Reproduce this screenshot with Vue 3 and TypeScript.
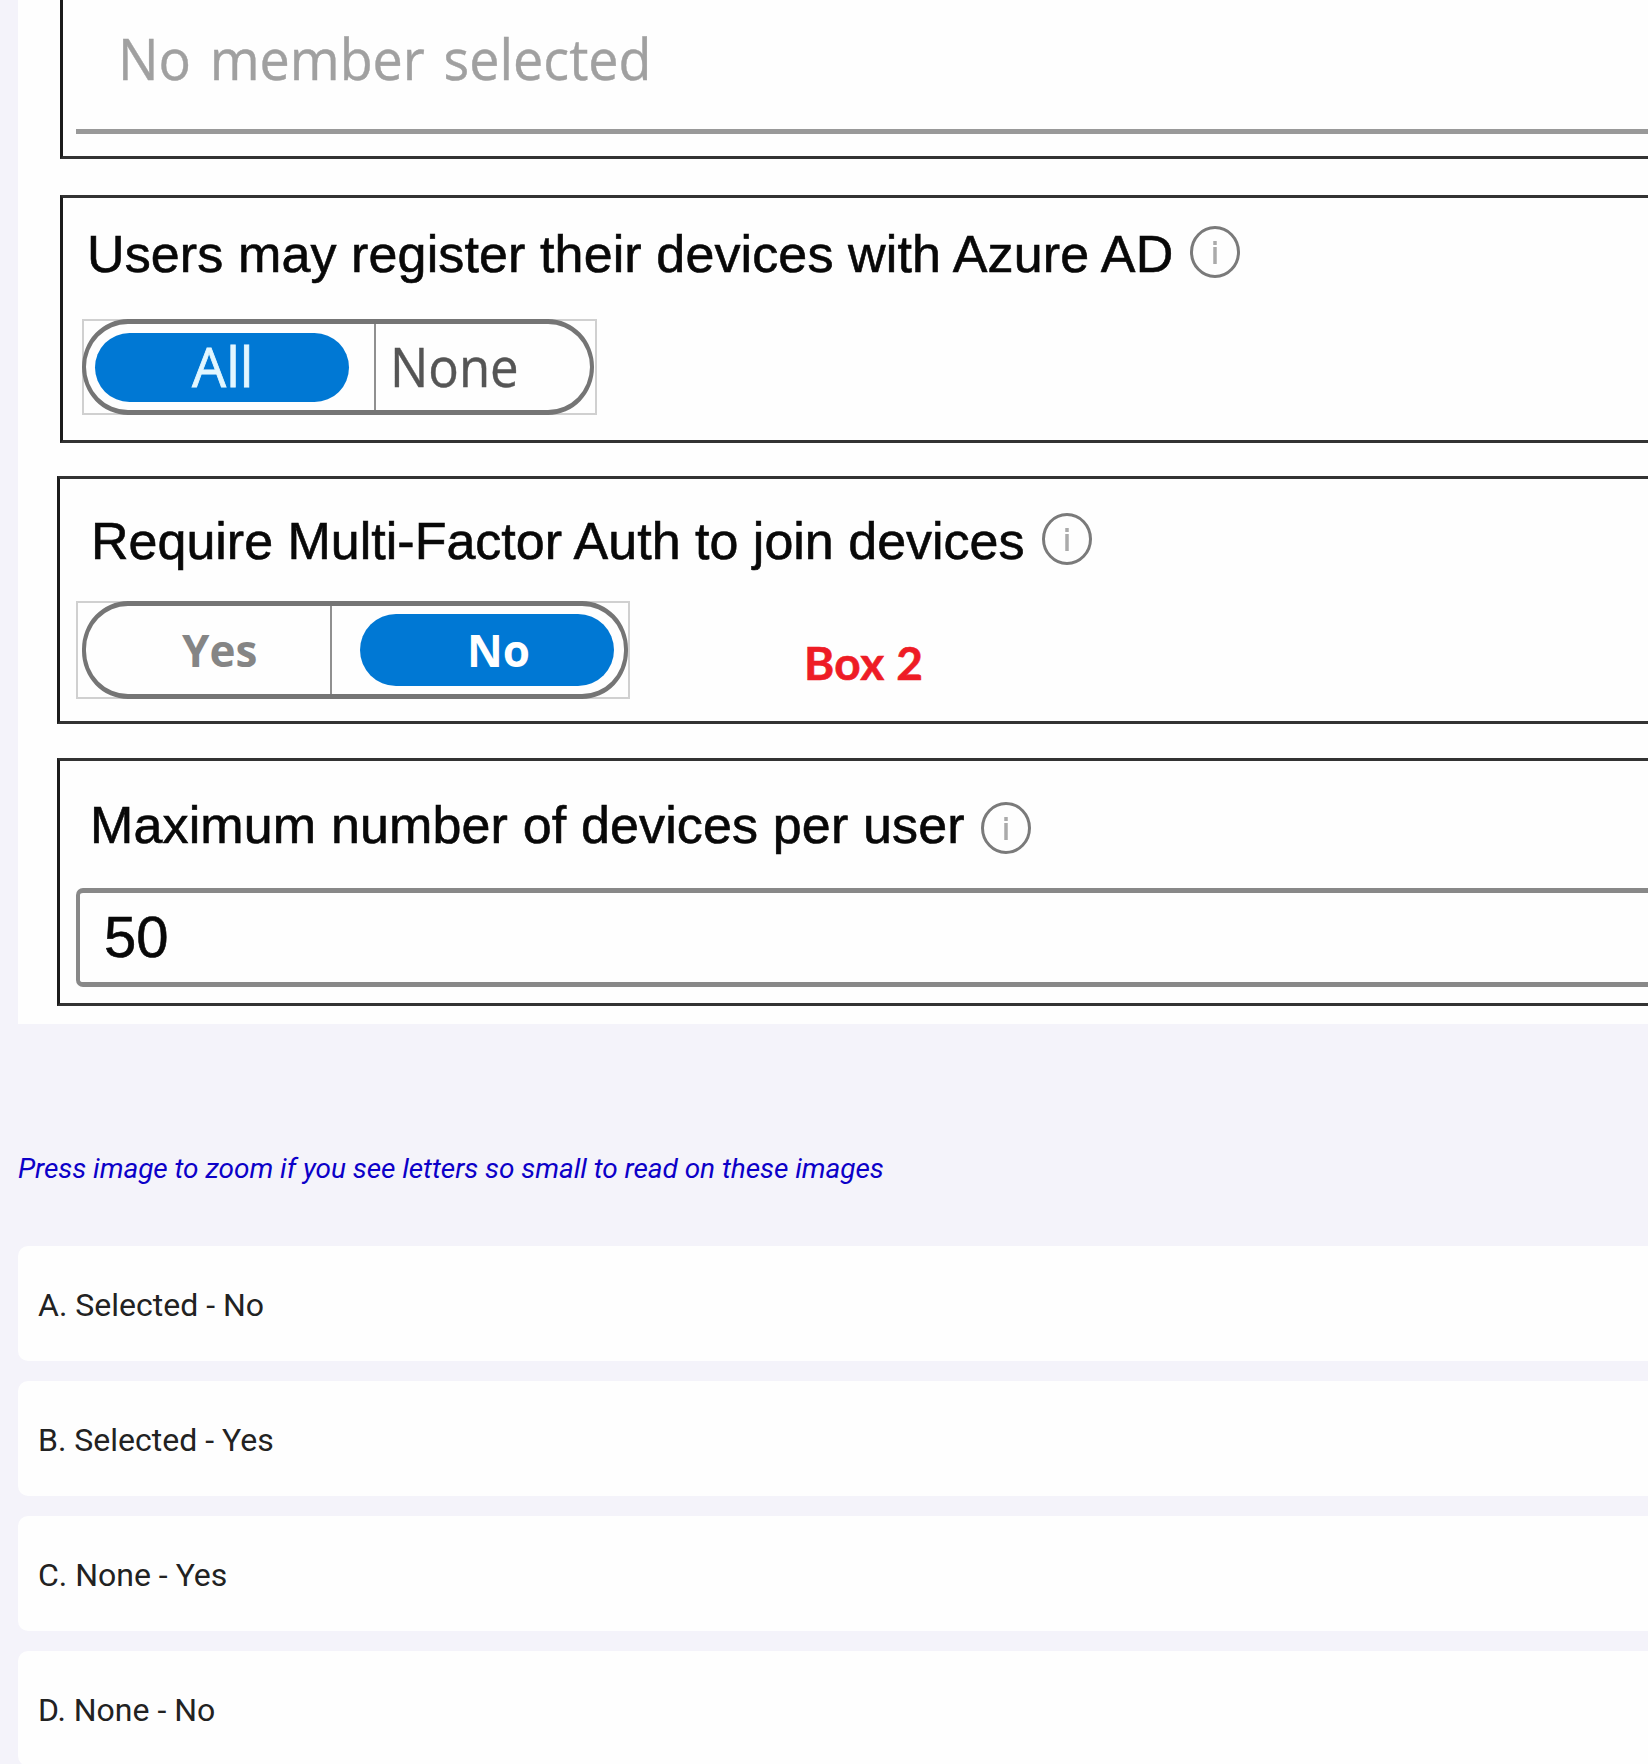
<script setup lang="ts">
interface Option {
  letter: string
  text: string
}

const options: Option[] = [
  { letter: 'A', text: 'Selected - No' },
  { letter: 'B', text: 'Selected - Yes' },
  { letter: 'C', text: 'None - Yes' },
  { letter: 'D', text: 'None - No' },
]
</script>

<template>
  <main class="page">
    <section class="panel">
      <div class="box box-member">
        <div class="member"><span>No member selected</span></div>
      </div>

      <div class="box box-register">
        <div class="label">
          <span>Users may register their devices with Azure AD</span>
          <svg class="info info-register" viewBox="0 0 50 52">
            <ellipse cx="25" cy="26" rx="23.5" ry="24.5" />
            <path d="M25 15v4M25 21v17" />
          </svg>
        </div>
        <div class="toggle toggle-register">
          <div class="pill">
            <div class="half first"><div class="chosen">All</div></div>
            <div class="half second"><span>None</span></div>
          </div>
        </div>
      </div>

      <div class="box box-mfa">
        <div class="label">
          <span>Require Multi-Factor Auth to join devices</span>
          <svg class="info info-mfa" viewBox="0 0 50 52">
            <ellipse cx="25" cy="26" rx="23.5" ry="24.5" />
            <path d="M25 15v4M25 21v17" />
          </svg>
        </div>
        <div class="row">
          <div class="toggle toggle-mfa">
            <div class="pill">
              <div class="half first">Yes</div>
              <div class="half second"><div class="chosen">No</div></div>
            </div>
          </div>
          <span class="note">Box 2</span>
        </div>
      </div>

      <div class="box box-max">
        <div class="label">
          <span>Maximum number of devices per user</span>
          <svg class="info info-max" viewBox="0 0 50 52">
            <ellipse cx="25" cy="26" rx="23.5" ry="24.5" />
            <path d="M25 15v4M25 21v17" />
          </svg>
        </div>
        <div class="field">50</div>
      </div>
    </section>

    <p class="hint">Press image to zoom if you see letters so small to read on these images</p>

    <ul class="options">
      <li v-for="o in options" :key="o.letter">{{ o.letter }}. {{ o.text }}</li>
    </ul>
  </main>
</template>

<style>
body {
  background: #f4f3fa;
}
</style>

<style scoped>
.page {
  box-sizing: border-box;
  width: 1648px;
  height: 1764px;
  padding-left: 18px;
  overflow: hidden;
  background: #f4f3fa;
  white-space: nowrap;
}

.panel {
  display: flex;
  flex-direction: column;
  box-sizing: border-box;
  height: 1024px;
  background: #fefefe;
}

.box {
  box-sizing: border-box;
  border: 3px solid #333;
  border-left-color: #1c1c1c;
  border-right: 0;
}

.box-member {
  height: 159px;
  margin-left: 42px;
  padding-left: 13px;
  border-top: 0;
}

.member {
  box-sizing: border-box;
  height: 134px;
  padding: 18px 0 0 42px;
  border-bottom: 5px solid #999;
  color: #a0a0a0;
  font: 57px/80px 'Open Sans', sans-serif;
  -webkit-text-stroke: 0.4px;
}

.member span {
  display: inline-block;
  transform: scaleX(0.945);
  transform-origin: left;
  word-spacing: 5px;
}

.box-register {
  height: 248px;
  margin: 36px 0 0 42px;
  padding: 26px 0 0 19px;
}

.box-mfa {
  height: 248px;
  margin: 33px 0 0 39px;
  padding: 32px 0 0 16px;
}

.box-max {
  height: 248px;
  margin: 34px 0 0 39px;
  padding: 34px 0 0 16px;
}

.label {
  display: flex;
  height: 60px;
  color: #080808;
  font: 52px/60px 'Liberation Sans', Arial, sans-serif;
  -webkit-text-stroke: 0.6px;
}

.box-register .label {
  padding-left: 5px;
  letter-spacing: 0.12px;
}

.box-mfa .label {
  padding-left: 15px;
}

.box-max .label {
  padding-left: 14px;
  letter-spacing: 0.14px;
}

.info {
  flex: none;
  width: 50px;
  height: 52px;
  fill: none;
  stroke: #7a7a7a;
  stroke-width: 3;
}

.info path {
  stroke: #aaa;
  stroke-width: 3.5;
}

.info-register {
  margin: 2px 0 0 17px;
}

.info-mfa {
  margin: 2px 0 0 17px;
}

.info-max {
  margin: 7px 0 0 16px;
}

.toggle {
  flex: none;
  box-sizing: border-box;
  border: 2px solid #d0d0d0;
}

.toggle-register {
  width: 515px;
  height: 96px;
  margin-top: 35px;
  font: 54px/69px 'Open Sans', sans-serif;
}

.toggle-mfa {
  width: 554px;
  height: 98px;
  padding-left: 5px;
  font: bold 44px/72px 'Open Sans', sans-serif;
}

.pill {
  display: flex;
  box-sizing: border-box;
  border: solid #757575;
  border-width: 5px 4px;
  border-radius: 46px / 48px;
}

.toggle-register .pill {
  width: 512px;
  height: 96px;
  margin: -2px 0 0 -2px;
}

.toggle-mfa .pill {
  width: 546px;
  height: 98px;
  margin: -2px 0 0 -1px;
}

.half {
  box-sizing: border-box;
}

.first {
  border-right: 2px solid #909090;
}

.toggle-register .first {
  width: 290px;
  padding: 9px 0 0 9px;
}

.toggle-register .second {
  padding: 8px 0 0 14px;
  color: #555;
}

.toggle-register .second span {
  display: inline-block;
  transform: scaleX(0.942);
  transform-origin: left;
  -webkit-text-stroke: 0.4px;
}

.toggle-mfa .first {
  width: 246px;
  padding: 8px 0 0 96px;
  color: #858585;
}

.toggle-mfa .second {
  padding: 8px 0 0 28px;
}

.chosen {
  box-sizing: border-box;
  width: 254px;
  background: #0078d4;
  color: #fff;
}

.toggle-register .chosen {
  height: 69px;
  padding-left: 97px;
  border-radius: 35px;
  color: #e2f7ff;
  line-height: 67px;
  -webkit-text-stroke: 0.8px;
}

.toggle-mfa .chosen {
  height: 72px;
  padding-left: 107px;
  border-radius: 36px;
}

.row {
  display: flex;
  margin-top: 30px;
}

.note {
  margin: 32px 0 0 174px;
  color: #ee1c25;
  font: bold 46px/60px Lato, sans-serif;
  letter-spacing: 0.4px;
  -webkit-text-stroke: 0.6px;
}

.field {
  box-sizing: border-box;
  height: 99px;
  margin-top: 33px;
  padding-left: 24px;
  border: 5px solid #888;
  border-width: 5px 0 5px 4px;
  border-radius: 7px 0 0 7px;
  color: #080808;
  font: 58px/87px 'Liberation Sans', Arial, sans-serif;
  -webkit-text-stroke: 0.6px;
}

.hint {
  height: 40px;
  margin: 125px 0 57px;
  color: #0c00c8;
  font: italic 28px/40px Roboto, sans-serif;
  letter-spacing: -0.046px;
}

.options {
  display: flex;
  flex-direction: column;
  gap: 20px;
  margin: 0;
  padding: 0;
  list-style: none;
}

.options li {
  box-sizing: border-box;
  height: 115px;
  padding-left: 20px;
  border-radius: 10px 0 0 10px;
  background: #fefefe;
  color: #222;
  font: 32px/118px Roboto, sans-serif;
}
</style>
